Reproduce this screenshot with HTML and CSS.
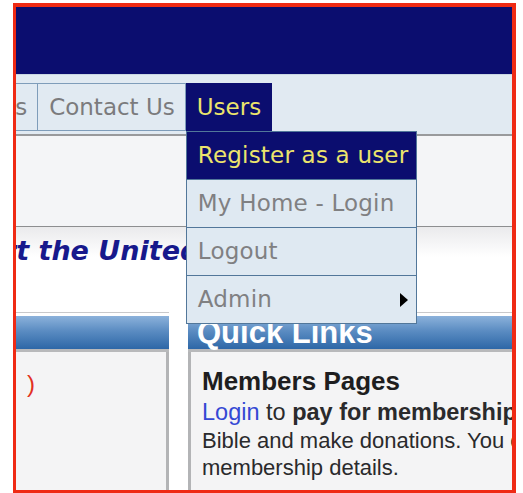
FILE: index.html
```html
<!DOCTYPE html>
<html lang="en">
<head>
<meta charset="utf-8">
<title>Users</title>
<link rel="stylesheet" href="styles.css">
</head>
<body>
<div class="frame">
  <header class="banner"></header>

  <nav class="menu">
    <ul class="menu-list">
      <li class="menu-item"><a class="menu-link">News</a></li>
      <li class="menu-item"><a class="menu-link">Contact Us</a></li>
      <li class="menu-item menu-item--open">
        <a class="menu-link">Users</a>
        <ul class="submenu">
          <li class="submenu-item submenu-item--active">Register as a user</li>
          <li class="submenu-item">My Home - Login</li>
          <li class="submenu-item">Logout</li>
          <li class="submenu-item submenu-item--parent">Admin<span class="caret"></span></li>
        </ul>
      </li>
    </ul>
  </nav>

  <div class="strip"></div>

  <section class="intro">
    <h1 class="intro-title">Support the United</h1>
  </section>

  <div class="panels">
    <section class="panel panel--left">
      <h2 class="panel-head">&nbsp;</h2>
      <div class="panel-body">
        <span class="note">)</span>
      </div>
    </section>
    <section class="panel panel--right">
      <h2 class="panel-head">Quick Links</h2>
      <div class="panel-body">
        <h3 class="block-title">Members Pages</h3>
        <p class="block-text"><span class="block-lead"><a class="text-link">Login</a> to <b>pay for membership fees, buy the</b></span><br>Bible and make donations. You can also update your<br>membership details.</p>
      </div>
    </section>
  </div>
</div>
</body>
</html>
```

FILE: styles.css
```css
html, body {
  margin: 0;
  padding: 0;
  background: #ffffff;
}

.frame {
  box-sizing: border-box;
  width: 503px;
  height: 490px;
  margin: 3px 0 0 13px;
  border-style: solid;
  border-color: #ef2a14;
  border-width: 4px 4px 3px 3px;
  overflow: hidden;
  background: #f6f6f8;
}

/* top banner */
.banner {
  height: 67px;
  background: #0b0d6f;
}

/* main menu bar */
.menu {
  box-sizing: border-box;
  height: 62px;
  padding-top: 8px;
  background: #e1eaf2;
  border-top: 1px solid #c9d6e2;
  border-bottom: 2px solid #999a9c;
  font-family: "DejaVu Sans", Verdana, sans-serif;
  font-size: 23px;
}

.menu-list {
  display: flex;
  margin: 0 0 0 -62px;
  padding: 0;
  list-style: none;
}

.menu-item {
  position: relative;
  border-top: 1px solid #7f9dba;
  border-bottom: 1px solid #7f9dba;
  border-right: 1px solid #7f9dba;
}

.menu-link {
  display: block;
  height: 46px;
  line-height: 46px;
  padding: 0 10px 0 11px;
  color: #7b7b7d;
  white-space: nowrap;
}

.menu-item--open {
  background: #0b0d6f;
  border-color: #0b0d6f;
}

.menu-item--open > .menu-link {
  padding: 0 10px 0 11px;
  color: #ece46c;
}

/* dropdown under "Users" */
.submenu {
  position: absolute;
  top: calc(100% + 1px);
  left: 0;
  width: 231px;
  box-sizing: border-box;
  margin: 0;
  padding: 0;
  list-style: none;
  background: #dfe9f2;
  border: 1px solid #52779a;
  border-bottom: 0;
}

.submenu-item {
  position: relative;
  height: 47px;
  line-height: 47px;
  padding-left: 11px;
  border-bottom: 1px solid #52779a;
  color: #808082;
  white-space: nowrap;
  letter-spacing: 0.2px;
}

.submenu-item--active {
  background: #0b0d6f;
  color: #ece46c;
}

.caret {
  position: absolute;
  right: 8px;
  top: 17px;
  width: 0;
  height: 0;
  border-left: 8px solid #000000;
  border-top: 7px solid transparent;
  border-bottom: 7px solid transparent;
}

/* light strip under the menu */
.strip {
  height: 90px;
  background: #f4f5f7;
  border-bottom: 1px solid #8d8e90;
}

.intro {
  height: 85px;
  background: linear-gradient(#eaeaec, #ffffff 30px);
}

.intro-title {
  margin: 0 0 0 -109px;
  padding-top: 9px;
  font-family: "DejaVu Sans", Verdana, sans-serif;
  font-size: 27px;
  font-style: italic;
  font-weight: bold;
  line-height: 30px;
  color: #17198c;
  white-space: nowrap;
}

/* content panels */
.panels {
  display: flex;
  gap: 19px;
  background: #ffffff;
  height: 200px;
  font-family: "Liberation Sans", Arial, sans-serif;
}

.panel {
  border-top: 1px solid #c9c9cb;
  padding-top: 3px;
  flex: none;
}

.panel--left {
  width: 153px;
}

.panel--right {
  width: 460px;
}

.panel-head {
  box-sizing: border-box;
  height: 36px;
  margin: 0;
  padding-left: 9px;
  line-height: 34px;
  font-size: 31px;
  font-weight: bold;
  color: #ffffff;
  background: linear-gradient(#8cb2db, #5b8cc2 45%, #2d67a7);
  border-bottom: 3px solid #b8b9bb;
  white-space: nowrap;
}

.panel-body {
  height: 160px;
  background: #f4f4f5;
}

.panel--left .panel-body {
  border-right: 3px solid #b3b4b6;
  padding: 18px 0 0 11px;
  box-sizing: border-box;
}

.panel--right .panel-body {
  border-left: 3px solid #b3b4b6;
  padding: 15px 0 0 11px;
  box-sizing: border-box;
}

.note {
  font-size: 24px;
  line-height: 28px;
  color: #e2301f;
}

.block-title {
  margin: 0 0 4px;
  font-size: 26px;
  font-weight: bold;
  line-height: 28px;
  color: #1e1e20;
}

.block-text {
  margin: 0;
  font-size: 22px;
  line-height: 27.5px;
  color: #2a2a2c;
  white-space: nowrap;
}

.block-lead {
  font-size: 23.5px;
}

.text-link {
  color: #3548d4;
}
```
